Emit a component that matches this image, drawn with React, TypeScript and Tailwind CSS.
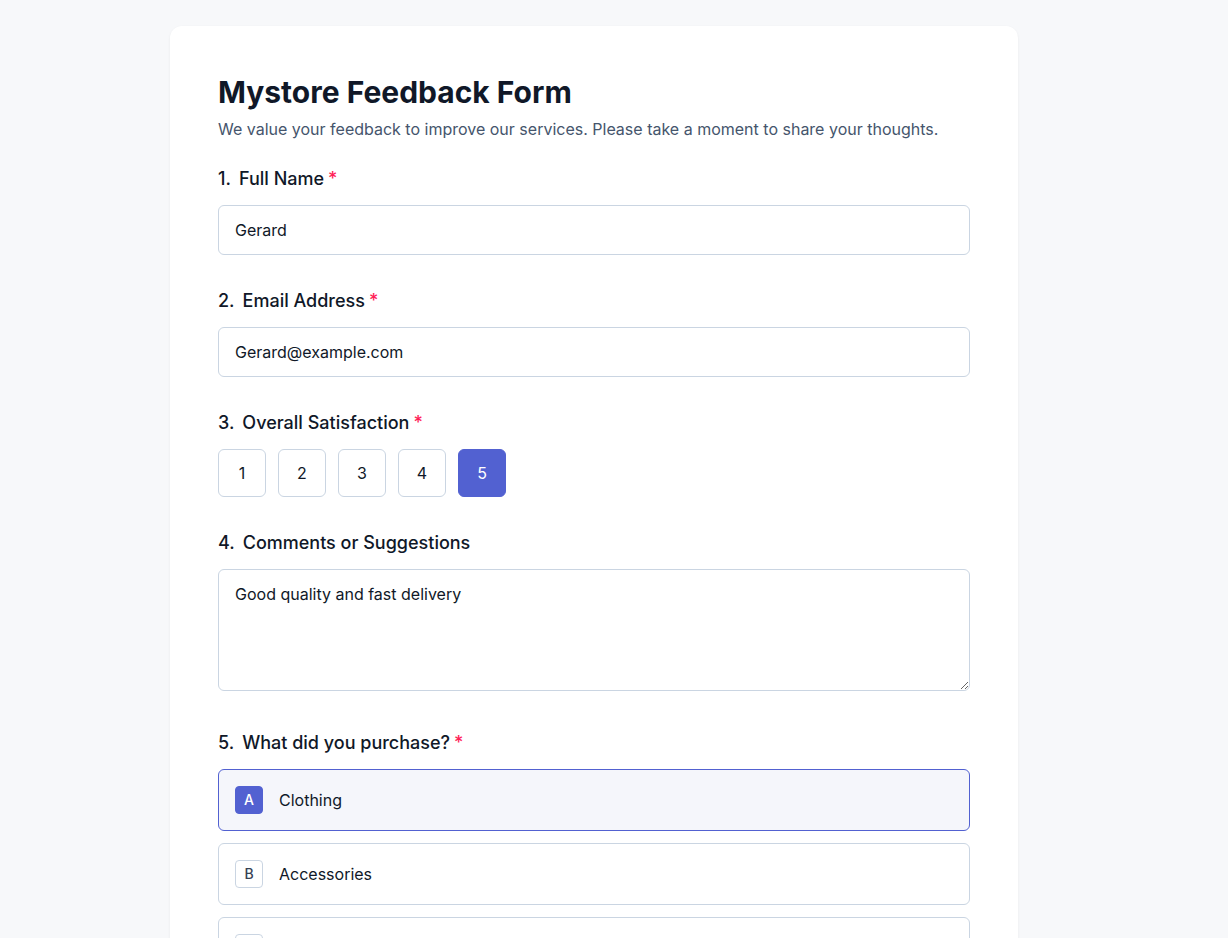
import { useState } from "react";

const ratings = [1, 2, 3, 4, 5];
const options = [
  { key: "A", label: "Clothing" },
  { key: "B", label: "Accessories" },
  { key: "C", label: "Footwear" },
  { key: "D", label: "Other" },
];

function Label({ n, text, required }: { n: number; text: string; required?: boolean }) {
  return (
    <div className="mb-3 flex items-center text-[18px] leading-7 font-medium text-gray-900">
      <span className="mr-2">{n}.</span>
      <span>{text}</span>
      {required && <span className="ml-1 text-rose-500">*</span>}
    </div>
  );
}

export default function App() {
  const [name, setName] = useState("Gerard");
  const [email, setEmail] = useState("Gerard@example.com");
  const [rating, setRating] = useState(5);
  const [comment, setComment] = useState("Good quality and fast delivery");
  const [purchase, setPurchase] = useState("A");

  return (
    <div className="min-h-screen bg-[#f7f8fa] pt-[26px] pb-10 font-['Inter',sans-serif]">
      <div className="ml-[170px] w-[848px] rounded-xl bg-white p-12 shadow-[0_1px_3px_rgba(15,23,42,0.06)]">
        <h1 className="text-[30px] leading-9 font-bold text-gray-900">Mystore Feedback Form</h1>
        <p className="mt-[7px] text-base leading-6 text-slate-600">
          We value your feedback to improve our services. Please take a moment to share your thoughts.
        </p>

        <div className="mt-6 flex flex-col gap-8">
          <div>
            <Label n={1} text="Full Name" required />
            <input
              value={name}
              onChange={(e) => setName(e.target.value)}
              className="block w-full rounded-md border border-slate-300 px-4 py-3 text-base leading-6 text-gray-900 outline-none"
            />
          </div>

          <div>
            <Label n={2} text="Email Address" required />
            <input
              value={email}
              onChange={(e) => setEmail(e.target.value)}
              className="block w-full rounded-md border border-slate-300 px-4 py-3 text-base leading-6 text-gray-900 outline-none"
            />
          </div>

          <div>
            <Label n={3} text="Overall Satisfaction" required />
            <div className="flex gap-3">
              {ratings.map((r) => (
                <button
                  key={r}
                  onClick={() => setRating(r)}
                  className={
                    r === rating
                      ? "flex h-12 w-12 items-center justify-center rounded-md border border-[#5261d1] bg-[#5261d1] text-base text-white"
                      : "flex h-12 w-12 items-center justify-center rounded-md border border-slate-300 bg-white text-base text-gray-900"
                  }
                >
                  {r}
                </button>
              ))}
            </div>
          </div>

          <div>
            <Label n={4} text="Comments or Suggestions" />
            <textarea
              value={comment}
              onChange={(e) => setComment(e.target.value)}
              className="mb-1.5 block h-[122px] w-full rounded-md border border-slate-300 px-4 py-3 text-base leading-6 text-gray-900 outline-none"
            />
          </div>

          <div>
            <Label n={5} text="What did you purchase?" required />
            <div className="flex flex-col gap-3">
              {options.map((o) => {
                const active = o.key === purchase;
                return (
                  <button
                    key={o.key}
                    onClick={() => setPurchase(o.key)}
                    className={
                      active
                        ? "flex items-center gap-4 rounded-md border border-[#5261d1] bg-[#f5f6fb] px-4 py-4 text-left"
                        : "flex items-center gap-4 rounded-md border border-slate-300 bg-white px-4 py-4 text-left"
                    }
                  >
                    <span
                      className={
                        active
                          ? "flex h-7 w-7 items-center justify-center rounded border border-[#5261d1] bg-[#5261d1] text-sm font-medium text-white"
                          : "flex h-7 w-7 items-center justify-center rounded border border-slate-300 bg-white text-sm font-medium text-gray-700"
                      }
                    >
                      {o.key}
                    </span>
                    <span className="text-base text-gray-900">{o.label}</span>
                  </button>
                );
              })}
            </div>
          </div>
        </div>
      </div>
    </div>
  );
}
